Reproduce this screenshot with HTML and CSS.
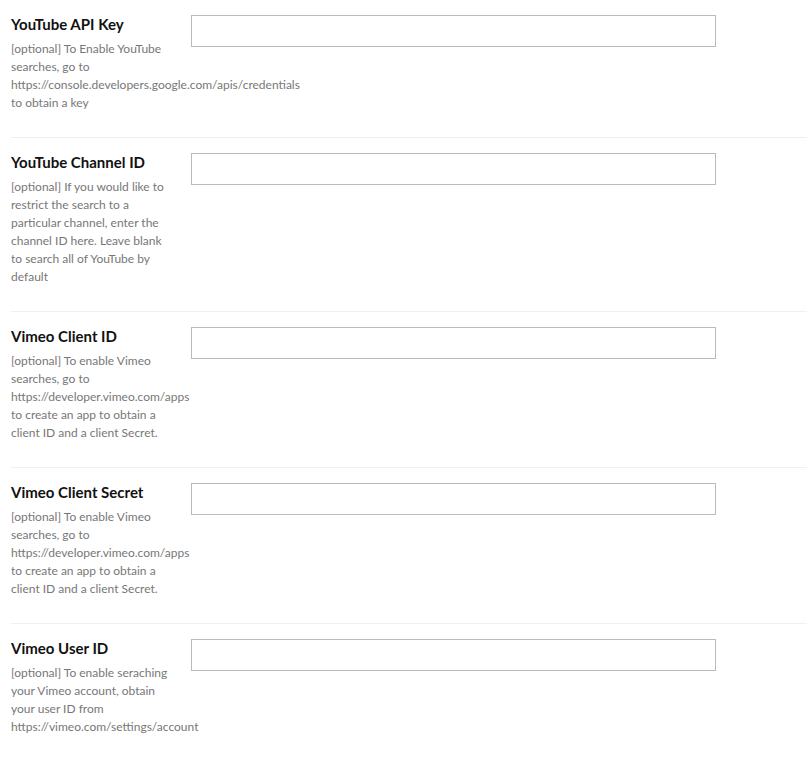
FILE: index.html
```html
<!DOCTYPE html>
<html>
<head>
<meta charset="utf-8">
<link rel="stylesheet" href="styles.css">
</head>
<body>
<div class="settings">
  <div class="row">
    <div class="label">
      <h3 class="title">YouTube API Key</h3>
      <p class="desc">[optional] To Enable YouTube searches, go to https://console.developers.google.com/apis/credentials to obtain a key</p>
    </div>
    <input class="field" type="text">
  </div>
  <div class="row">
    <div class="label">
      <h3 class="title">YouTube Channel ID</h3>
      <p class="desc">[optional] If you would like to restrict the search to a particular channel, enter the channel ID here. Leave blank to search all of YouTube by default</p>
    </div>
    <input class="field" type="text">
  </div>
  <div class="row">
    <div class="label">
      <h3 class="title">Vimeo Client ID</h3>
      <p class="desc">[optional] To enable Vimeo searches, go to https://developer.vimeo.com/apps to create an app to obtain a client ID and a client Secret.</p>
    </div>
    <input class="field" type="text">
  </div>
  <div class="row">
    <div class="label">
      <h3 class="title">Vimeo Client Secret</h3>
      <p class="desc">[optional] To enable Vimeo searches, go to https://developer.vimeo.com/apps to create an app to obtain a client ID and a client Secret.</p>
    </div>
    <input class="field" type="text">
  </div>
  <div class="row">
    <div class="label">
      <h3 class="title">Vimeo User ID</h3>
      <p class="desc">[optional] To enable seraching your Vimeo account, obtain your user ID from https://vimeo.com/settings/account</p>
    </div>
    <input class="field" type="text">
  </div>
</div>
</body>
</html>
```
FILE: styles.css
```css
html, body {
  margin: 0;
  padding: 0;
  background: #fff;
}
body {
  font-family: Lato, "Open Sans", sans-serif;
}
.settings {
  padding: 0 0 0 11px;
}
.row {
  display: flex;
  align-items: flex-start;
  gap: 10px;
  padding: 15px 0 25px;
  border-top: 1px solid #f0f0f0;
}
.row:first-child {
  border-top: 0;
}
.label {
  width: 162px;
  margin-right: 8px;
  flex: none;
}
.title {
  margin: 0 0 7px;
  font-size: 15px;
  line-height: 18px;
  font-weight: 700;
  color: #111;
}
.desc {
  margin: 0;
  font-size: 12px;
  line-height: 18px;
  color: #777;
}
.field {
  box-sizing: border-box;
  width: 525px;
  height: 32px;
  margin: 0;
  padding: 0 8px;
  border: 1px solid #bbb;
  border-radius: 0;
  background: #fff;
  font: inherit;
}
```
